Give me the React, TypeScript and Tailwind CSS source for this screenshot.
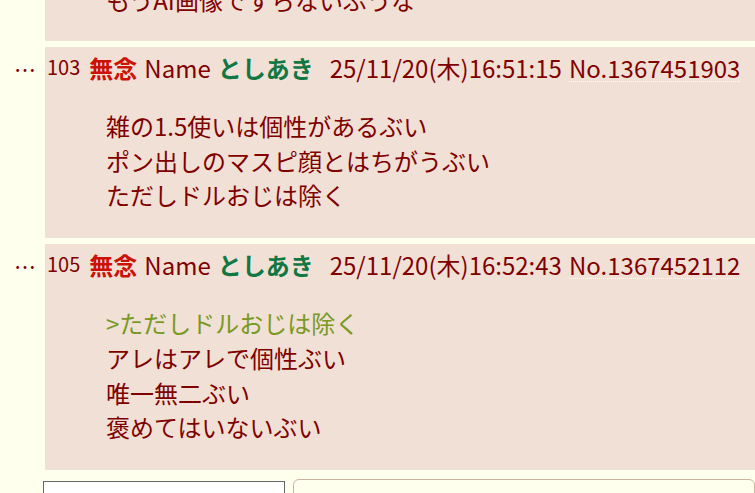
import React from 'react';

type Post = {
  no: string;
  date: string;
  id: string;
  lines: string[];
};

const POSTS: Post[] = [
  {
    no: '103',
    date: '25/11/20(木)16:51:15',
    id: 'No.1367451903',
    lines: ['雑の1.5使いは個性があるぶい', 'ポン出しのマスピ顔とはちがうぶい', 'ただしドルおじは除く'],
  },
  {
    no: '105',
    date: '25/11/20(木)16:52:43',
    id: 'No.1367452112',
    lines: ['>ただしドルおじは除く', 'アレはアレで個性ぶい', '唯一無二ぶい', '褒めてはいないぶい'],
  },
];

function PostRow({ post }: { post: Post }) {
  return (
    <div className="flex mt-[6px]">
      <div className="w-[45px] shrink-0 pt-[4px] pr-[9px] text-right text-[22px] leading-[34px] text-[#800000]">…</div>
      <div className="flex-1 min-w-0 bg-[#f0e0d6] pt-[4px] pb-[25px] pl-[2px]">
        {/* header */}
        <div className="flex items-baseline text-[24px] leading-[34px] whitespace-nowrap">
          <span className="text-[20px] text-[#800000] relative top-[-3px]">{post.no}</span>
          <span className="ml-[9px] font-bold text-[#cc1105]">無念</span>
          <span className="ml-[7px] text-[#800000]">Name</span>
          <span className="ml-[7px] font-bold text-[#117743]">としあき</span>
          <span className="ml-[16px] text-[#800000]">{post.date}</span>
          <span className="ml-[7px] text-[#800000] leading-[26px] border-b border-dotted border-white">{post.id}</span>
          <span className="ml-[10px] shrink-0 text-[20px] text-[#c8a898]">⋮</span>
        </div>
        {/* body */}
        <div className="mt-[22px] ml-[59px] text-[24px] leading-[34.7px] text-[#800000]">
          {post.lines.map((l, i) => (
            <div key={i} className={l.startsWith('>') ? 'text-[#789922]' : ''}>
              {l}
            </div>
          ))}
        </div>
      </div>
    </div>
  );
}

export default function App() {
  return (
    <div
      className="w-[755px] h-[493px] overflow-hidden bg-[#ffffee]"
      style={{ fontFamily: '"Noto Sans CJK JP", "Noto Sans", sans-serif' }}
    >
      {/* previous post, scrolled off the top */}
      <div className="flex mt-[-17px]">
        <div className="w-[45px] shrink-0" />
        <div className="flex-1 bg-[#f0e0d6] pb-[24px] pl-[61px] text-[24px] leading-[34px] text-[#800000] whitespace-nowrap">
          もうAI画像ですらないぶうな
        </div>
      </div>

      {POSTS.map((p) => (
        <PostRow key={p.no} post={p} />
      ))}

      {/* reply form top edge */}
      <div className="flex items-start mt-[9px] pl-[43px]">
        <div className="mt-[2px] w-[242px] h-[40px] border border-[#666666] bg-white" />
        <div className="ml-[8px] flex-1 h-[40px] rounded-[6px] border border-[#cdb4a2] bg-[#ffffee]" />
      </div>
    </div>
  );
}
